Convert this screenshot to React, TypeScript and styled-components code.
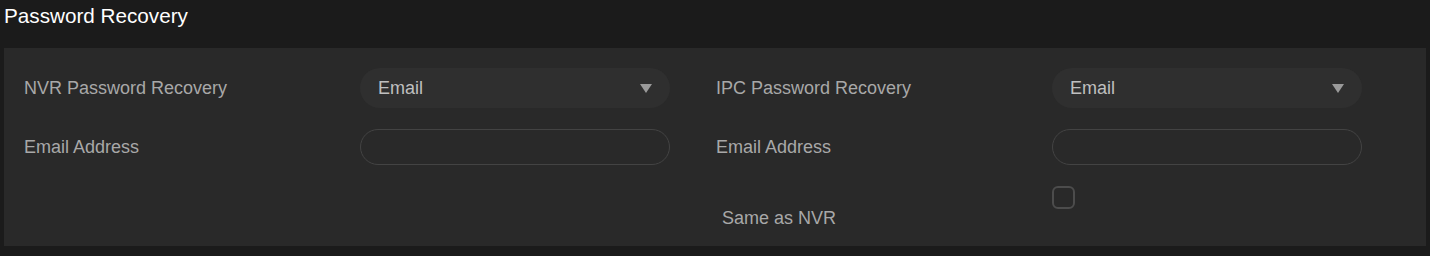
import React from "react";
import styled, { createGlobalStyle } from "styled-components";

const GlobalStyle = createGlobalStyle`
  html, body {
    margin: 0;
    padding: 0;
    background: #1b1b1b;
  }
  body {
    font-family: "Liberation Sans", Arial, sans-serif;
  }
`;

const Page = styled.div`
  width: 1430px;
  height: 256px;
  box-sizing: border-box;
  padding: 4px 4px 0 4px;
  background: #1b1b1b;
`;

const Title = styled.h1`
  margin: 0 0 20px 0;
  font-size: 20.7px;
  line-height: 24px;
  font-weight: normal;
  color: #ffffff;
`;

const Panel = styled.div`
  height: 198px;
  box-sizing: border-box;
  background: #292929;
  padding: 20px 0 0 20px;
  display: flex;
`;

const Column = styled.div`
  width: 692px;
  display: flex;
  flex-direction: column;
`;

const Row = styled.div<{ $top?: number; $height?: number; $align?: string }>`
  display: flex;
  align-items: ${(p) => p.$align || "center"};
  height: ${(p) => p.$height ?? 40}px;
  margin-top: ${(p) => p.$top ?? 0}px;
`;

const Label = styled.div<{ $indent?: number; $self?: string }>`
  width: 336px;
  box-sizing: border-box;
  padding-left: ${(p) => p.$indent ?? 0}px;
  font-size: 18px;
  line-height: 20px;
  color: #a8a8a8;
  align-self: ${(p) => p.$self || "auto"};
`;

const Select = styled.div`
  width: 310px;
  height: 40px;
  box-sizing: border-box;
  border-radius: 20px;
  background: #2f2f2f;
  padding: 0 18px;
  display: flex;
  align-items: center;
  justify-content: space-between;
  font-size: 18px;
  color: #bfbfbf;
`;

const Arrow = styled.span`
  width: 0;
  height: 0;
  border-left: 6px solid transparent;
  border-right: 6px solid transparent;
  border-top: 9px solid #9a9a9a;
`;

const Input = styled.input`
  width: 310px;
  height: 36px;
  box-sizing: border-box;
  border-radius: 18px;
  border: 1px solid #434343;
  background: transparent;
  outline: none;
  color: #bfbfbf;
  font-family: inherit;
  font-size: 18px;
  padding: 0 18px;
`;

const Checkbox = styled.span`
  width: 23px;
  height: 23px;
  box-sizing: border-box;
  border: 2px solid #4c4c4c;
  border-radius: 6px;
  display: block;
`;

const Field = ({ label, value }: { label: string; value: string }) => (
  <>
    <Row>
      <Label>{label}</Label>
      <Select>
        <span>{value}</span>
        <Arrow />
      </Select>
    </Row>
    <Row $top={19}>
      <Label>Email Address</Label>
      <Input type="text" />
    </Row>
  </>
);

export default function App() {
  return (
    <Page>
      <GlobalStyle />
      <Title>Password Recovery</Title>
      <Panel>
        <Column>
          <Field label="NVR Password Recovery" value="Email" />
        </Column>
        <Column>
          <Field label="IPC Password Recovery" value="Email" />
          <Row $top={19} $height={42} $align="flex-start">
            <Label $indent={6} $self="flex-end">
              Same as NVR
            </Label>
            <Checkbox />
          </Row>
        </Column>
      </Panel>
    </Page>
  );
}
